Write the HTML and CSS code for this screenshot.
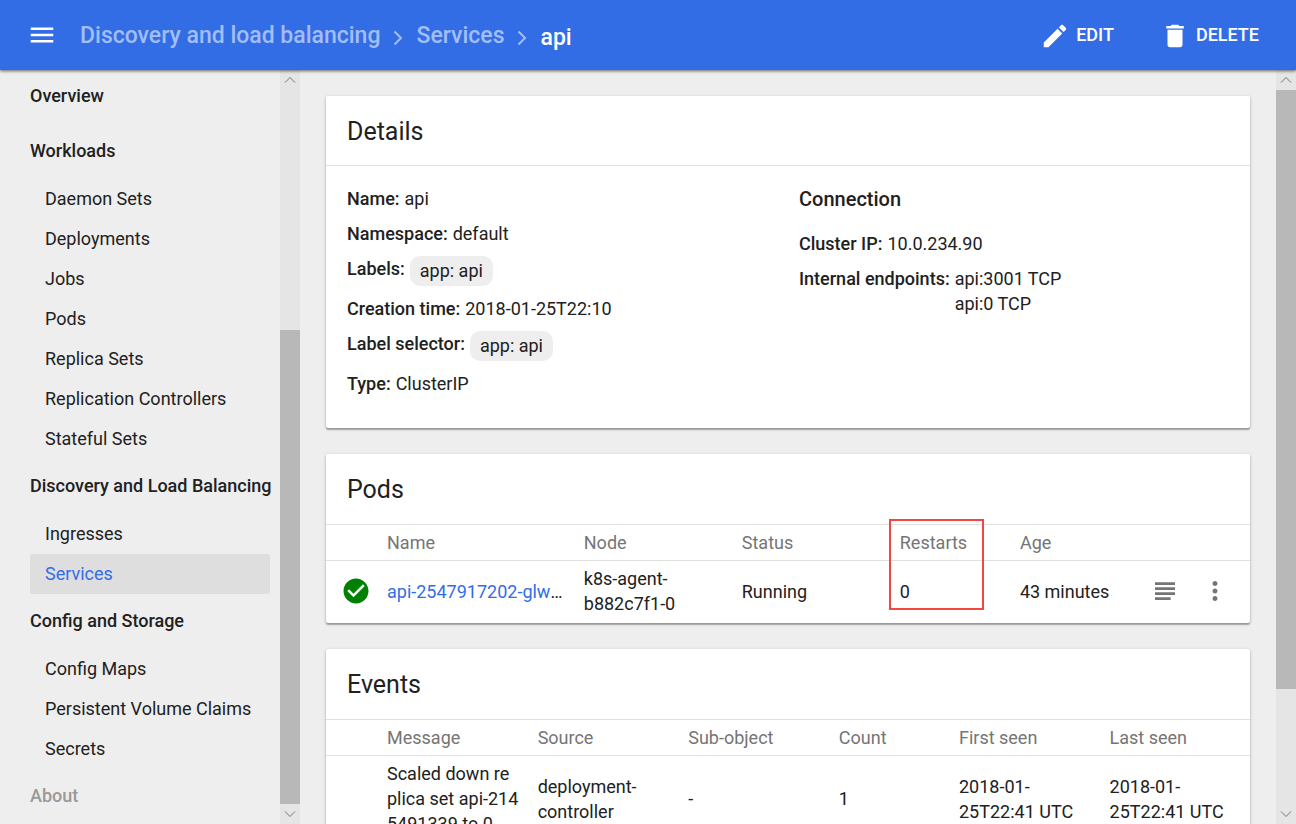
FILE: index.html
```html
<!DOCTYPE html>
<html lang="en">
<head>
<meta charset="utf-8">
<title>api - Services</title>
<link rel="stylesheet" href="styles.css">
</head>
<body>
<header class="topbar">
  <button class="icon-button menu-button" type="button" aria-label="Toggle navigation">
    <svg class="icon" viewBox="0 0 24 24"><path d="M3 18h18v-2H3v2zm0-5h18v-2H3v2zm0-7v2h18V6H3z"/></svg>
  </button>
  <nav class="crumbs" aria-label="Breadcrumb">
    <a href="#discovery">Discovery and load balancing</a>
    <svg class="chevron" viewBox="0 0 10 16"><path d="M1.500 1.500L8 8l-6.500 6.500"/></svg>
    <a href="#services">Services</a>
    <svg class="chevron" viewBox="0 0 10 16"><path d="M1.500 1.500L8 8l-6.500 6.500"/></svg>
    <span class="crumb-current">api</span>
  </nav>
  <div class="actions">
    <button class="action" type="button">
      <svg class="icon" viewBox="0 0 24 24"><path d="M3 17.250V21h3.750L17.810 9.940l-3.750-3.750L3 17.250zM20.710 7.040c.39-.39.39-1.020 0-1.410l-2.340-2.340c-.39-.39-1.020-.39-1.410 0l-1.830 1.830 3.750 3.750 1.830-1.830z"/></svg>
      EDIT
    </button>
    <button class="action" type="button">
      <svg class="icon" viewBox="0 0 24 24"><path d="M6 19c0 1.100.9 2 2 2h8c1.100 0 2-.9 2-2V7H6v12zM19 4h-3.500l-1-1h-5l-1 1H5v2h14V4z"/></svg>
      DELETE
    </button>
  </div>
</header>

<div class="layout">
  <aside class="sidebar">
    <nav class="side-nav" aria-label="Main">
      <a class="nav-group" href="#overview">Overview</a>
      <a class="nav-group" href="#workloads">Workloads</a>
      <a class="nav-item" href="#daemonsets">Daemon Sets</a>
      <a class="nav-item" href="#deployments">Deployments</a>
      <a class="nav-item" href="#jobs">Jobs</a>
      <a class="nav-item" href="#pods">Pods</a>
      <a class="nav-item" href="#replicasets">Replica Sets</a>
      <a class="nav-item" href="#controllers">Replication Controllers</a>
      <a class="nav-item" href="#statefulsets">Stateful Sets</a>
      <a class="nav-group" href="#discovery">Discovery and Load Balancing</a>
      <a class="nav-item" href="#ingresses">Ingresses</a>
      <a class="nav-item nav-item-active" href="#services" aria-current="page">Services</a>
      <a class="nav-group" href="#config">Config and Storage</a>
      <a class="nav-item" href="#configmaps">Config Maps</a>
      <a class="nav-item" href="#claims">Persistent Volume Claims</a>
      <a class="nav-item" href="#secrets">Secrets</a>
      <a class="nav-group nav-group-muted" href="#about">About</a>
    </nav>
  </aside>
  <div class="scrollbar" aria-hidden="true">
    <svg class="scroll-arrow" viewBox="0 0 20 20"><path d="M5 12.500l5-5 5 5"/></svg>
    <div class="scroll-track scroll-track-end"><div class="scroll-thumb scroll-thumb-side"></div></div>
    <svg class="scroll-arrow" viewBox="0 0 20 20"><path d="M5 7.500l5 5 5-5"/></svg>
  </div>

  <main class="content">
    <section class="card">
      <h2 class="card-title card-title-ruled">Details</h2>
      <div class="details">
        <dl class="fields">
          <div class="field"><dt>Name:</dt><dd>api</dd></div>
          <div class="field"><dt>Namespace:</dt><dd>default</dd></div>
          <div class="field"><dt>Labels:</dt><dd class="chip">app: api</dd></div>
          <div class="field"><dt>Creation time:</dt><dd>2018-01-25T22:10</dd></div>
          <div class="field"><dt>Label selector:</dt><dd class="chip">app: api</dd></div>
          <div class="field"><dt>Type:</dt><dd>ClusterIP</dd></div>
        </dl>
        <div>
          <h3 class="sub-title">Connection</h3>
          <dl class="fields">
            <div class="field"><dt>Cluster IP:</dt><dd>10.0.234.90</dd></div>
            <div class="field"><dt>Internal endpoints:</dt><dd>api:3001 TCP<br>api:0 TCP</dd></div>
          </dl>
        </div>
      </div>
    </section>

    <section class="card">
      <h2 class="card-title">Pods</h2>
      <table class="grid pods">
        <colgroup>
          <col class="col-status"><col><col class="col-17"><col class="col-17"><col class="col-13"><col class="col-13"><col class="col-icon"><col class="col-menu">
        </colgroup>
        <thead>
          <tr><th></th><th>Name</th><th>Node</th><th>Status</th><th class="marked">Restarts<span class="marker"></span></th><th>Age</th><th></th><th></th></tr>
        </thead>
        <tbody>
          <tr>
            <td class="cell-status">
              <svg class="icon" viewBox="0 0 24 24" role="img" aria-label="Healthy"><path fill="#008000" d="M12 2C6.480 2 2 6.480 2 12s4.480 10 10 10 10-4.480 10-10S17.520 2 12 2zm-2 15l-5-5 1.410-1.410L10 14.170l7.590-7.590L19 8l-9 9z"/></svg>
            </td>
            <td class="cell-name"><a class="link" href="#pod">api-2547917202-glwq3</a></td>
            <td>k8s-agent-<br>b882c7f1-0</td>
            <td>Running</td>
            <td>0</td>
            <td>43 minutes</td>
            <td class="cell-icon">
              <button class="icon-button" type="button" aria-label="Logs"><svg class="icon" viewBox="0 0 24 24"><path d="M4 17h12.500v2.200H4zM4 13h16v2.200H4zM4 9h16v2.200H4zM4 5h16v2.200H4z"/></svg></button>
            </td>
            <td class="cell-icon">
              <button class="icon-button" type="button" aria-label="More actions"><svg class="icon" viewBox="0 0 24 24"><path d="M12 8c1.100 0 2-.9 2-2s-.9-2-2-2-2 .9-2 2 .9 2 2 2zm0 2c-1.100 0-2 .9-2 2s.9 2 2 2 2-.9 2-2-.9-2-2-2zm0 6c-1.100 0-2 .9-2 2s.9 2 2 2 2-.9 2-2-.9-2-2-2z"/></svg></button>
            </td>
          </tr>
        </tbody>
      </table>
    </section>

    <section class="card">
      <h2 class="card-title">Events</h2>
      <table class="grid">
        <colgroup>
          <col class="col-status"><col><col class="col-16"><col class="col-16"><col class="col-13"><col class="col-16"><col class="col-15">
        </colgroup>
        <thead>
          <tr><th></th><th>Message</th><th>Source</th><th>Sub-object</th><th>Count</th><th>First seen</th><th>Last seen</th></tr>
        </thead>
        <tbody>
          <tr>
            <td></td>
            <td>Scaled down re<br>plica set api-214<br>5491339 to 0</td>
            <td>deployment-<br>controller</td>
            <td>-</td>
            <td>1</td>
            <td>2018-01-<br>25T22:41 UTC</td>
            <td>2018-01-<br>25T22:41 UTC</td>
          </tr>
        </tbody>
      </table>
    </section>
  </main>
  <div class="scrollbar" aria-hidden="true">
    <svg class="scroll-arrow" viewBox="0 0 20 20"><path d="M5 12.500l5-5 5 5"/></svg>
    <div class="scroll-track"><div class="scroll-thumb scroll-thumb-main"></div></div>
    <svg class="scroll-arrow" viewBox="0 0 20 20"><path d="M5 7.500l5 5 5-5"/></svg>
  </div>
</div>
</body>
</html>
```
FILE: styles.css
```css
* { box-sizing: border-box; }

body {
  margin: 0;
  height: 100vh;
  display: flex;
  flex-direction: column;
  overflow: hidden;
  background: #eee;
  color: #212121;
  font: 400 18px/25px Roboto, sans-serif;
}

h2, h3, dl, dd { margin: 0; }
a { color: inherit; text-decoration: none; }

button {
  padding: 0;
  border: 0;
  background: none;
  color: inherit;
  font: inherit;
  cursor: pointer;
}

.icon-button { display: block; }
.icon {
  display: block;
  width: 30px;
  height: 30px;
  fill: currentColor;
}

/* Top bar */
.topbar {
  position: relative;
  z-index: 1;
  flex: none;
  display: flex;
  align-items: center;
  height: 70px;
  padding: 0 37px 0 27px;
  background: #326de6;
  color: #fff;
  box-shadow: 0 1px 3px rgba(0, 0, 0, 0.6);
}
.menu-button { margin-right: 23px; }
.crumbs {
  display: flex;
  align-items: center;
  gap: 13px;
  font-size: 23px;
  font-weight: 500;
}
.crumbs a { color: #a2bef5; }
.crumb-current { padding-top: 4px; }
.chevron {
  width: 10px;
  height: 16px;
  margin-top: 5px;
  fill: none;
  stroke: #a2bef5;
  stroke-width: 2;
}
.actions {
  display: flex;
  gap: 46px;
  margin-left: auto;
  padding-bottom: 2px;
  font-weight: 500;
}
.action {
  display: flex;
  align-items: center;
  gap: 6px;
}
.action .icon { margin-top: 4px; }

/* Page layout */
.layout {
  flex: 1;
  min-height: 0;
  display: flex;
}
.sidebar {
  flex: none;
  width: 280px;
  padding: 0 10px 0 30px;
  overflow: hidden;
}
.side-nav {
  display: flex;
  flex-direction: column;
  margin-top: -1px;
}
.nav-group {
  padding-bottom: 2px;
  line-height: 53px;
  font-weight: 500;
  white-space: nowrap;
}
.nav-group-muted { color: #999; }
.nav-item {
  padding-left: 15px;
  border-radius: 2px;
  line-height: 40px;
}
.nav-item-active {
  background: #dedede;
  color: #326de6;
}
.content {
  flex: 1;
  min-width: 0;
  display: flex;
  flex-direction: column;
  gap: 26px;
  padding: 26px 26px 0;
  overflow: hidden;
}

/* Scroll bars */
.scrollbar {
  flex: none;
  display: flex;
  flex-direction: column;
  width: 20px;
  background: #e5e5e5;
}
.scroll-arrow {
  flex: none;
  width: 20px;
  height: 20px;
  fill: none;
  stroke: #777;
  stroke-width: 1;
}
.scroll-track {
  flex: 1;
  display: flex;
  flex-direction: column;
}
.scroll-track-end { justify-content: flex-end; }
.scroll-thumb { background: #b8b8b8; }
.scroll-thumb-side { height: 66.4%; }
.scroll-thumb-main { height: 83.9%; }

/* Cards */
.card {
  flex: none;
  border-radius: 2px;
  background: #fff;
  box-shadow: 0 1px 3px rgba(0, 0, 0, 0.3), 0 2px 1px rgba(0, 0, 0, 0.2);
}
.card-title {
  height: 70px;
  padding: 0 21px;
  font-size: 25px;
  font-weight: 400;
  line-height: 72px;
}
.card-title-ruled { border-bottom: 1px solid #e0e0e0; }
.details {
  display: grid;
  grid-template-columns: 1fr 1fr;
  gap: 22px;
  padding: 16px 21px 26px;
}
.sub-title {
  margin-bottom: 10px;
  font-size: 20px;
  font-weight: 500;
  line-height: 35px;
}
.field {
  display: flex;
  align-items: flex-start;
  gap: 5px;
  padding: 4px 0 6px;
}
.field dt { font-weight: 500; }
.chip {
  padding: 0 10px;
  border-radius: 10px;
  background: #eee;
  line-height: 30px;
}

/* Tables */
.grid {
  width: 100%;
  table-layout: fixed;
  border-collapse: separate;
  border-spacing: 0;
}
.grid th {
  height: 37px;
  padding: 0;
  border: solid #e0e0e0;
  border-width: 1px 0;
  color: #757575;
  font-weight: 400;
  text-align: left;
}
.grid td {
  padding: 5px 0;
  vertical-align: middle;
}
.grid tbody tr { height: 62px; }
.pods td { padding: 4px 0 6px; }
.col-status { width: 61px; }
.col-icon { width: 50px; }
.col-menu { width: 60px; }
.col-13 { width: 13%; }
.col-15 { width: 15.2%; }
.col-16 { width: 16.3%; }
.col-17 { width: 17.1%; }
.grid .cell-status { padding-left: 15px; }
.grid .cell-name {
  padding-right: 20px;
  overflow: hidden;
  text-overflow: ellipsis;
  white-space: nowrap;
}
.link { color: #326de6; }
.grid .cell-icon {
  padding-left: 10px;
  color: #757575;
}
.marked { position: relative; }
.marker {
  position: absolute;
  top: -6px;
  left: -11px;
  width: 95px;
  height: 91px;
  border: 2px solid #f44545;
}
```
